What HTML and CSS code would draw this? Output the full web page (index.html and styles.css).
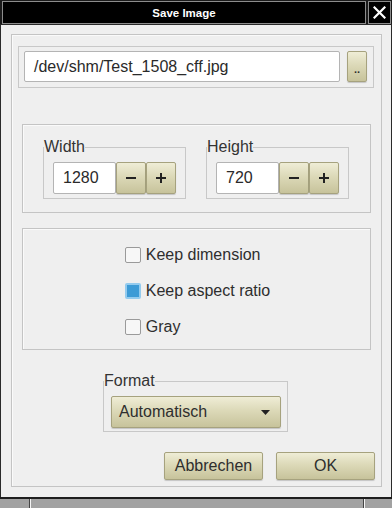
FILE: index.html
```html
<!DOCTYPE html>
<html>
<head>
<meta charset="utf-8">
<link rel="stylesheet" href="styles.css">
</head>
<body>
<div class="win">
  <div class="titlebar">
    <div class="title">Save Image</div>
    <div class="close">
      <svg width="13" height="13" viewBox="0 0 13 13"><path d="M1.5 1.5 L11.5 11.5 M11.5 1.5 L1.5 11.5" stroke="#fff" stroke-width="2.2" stroke-linecap="square"/></svg>
    </div>
  </div>
  <div class="dialog">
    <div class="frame">
      <div class="filebox">
        <div class="field file">/dev/shm/Test_1508_cff.jpg</div>
        <div class="btn dots">..</div>
      </div>
      <div class="group sizegroup">
        <fieldset class="fs">
          <legend>Width</legend>
          <div class="spin">
            <div class="field num">1280</div>
            <div class="btn sb">
              <svg width="12" height="12" viewBox="0 0 12 12"><path d="M1 6 H11" stroke="#222" stroke-width="2"/></svg>
            </div>
            <div class="btn sb">
              <svg width="12" height="12" viewBox="0 0 12 12"><path d="M1 6 H11 M6 1 V11" stroke="#222" stroke-width="2"/></svg>
            </div>
          </div>
        </fieldset>
        <fieldset class="fs">
          <legend>Height</legend>
          <div class="spin">
            <div class="field num">720</div>
            <div class="btn sb">
              <svg width="12" height="12" viewBox="0 0 12 12"><path d="M1 6 H11" stroke="#222" stroke-width="2"/></svg>
            </div>
            <div class="btn sb">
              <svg width="12" height="12" viewBox="0 0 12 12"><path d="M1 6 H11 M6 1 V11" stroke="#222" stroke-width="2"/></svg>
            </div>
          </div>
        </fieldset>
      </div>
      <div class="group checkgroup">
        <div class="checklist">
          <div class="row"><span class="cb"></span><span>Keep dimension</span></div>
          <div class="row"><span class="cb on"></span><span>Keep aspect ratio</span></div>
          <div class="row"><span class="cb"></span><span>Gray</span></div>
        </div>
      </div>
      <div class="formatrow">
        <fieldset class="fs fmt">
          <legend>Format</legend>
          <div class="fmtin">
            <div class="btn combo"><span>Automatisch</span><svg width="9" height="5" viewBox="0 0 9 5"><path d="M0 0 H9 L4.5 5 Z" fill="#222"/></svg></div>
          </div>
        </fieldset>
      </div>
      <div class="buttons">
        <div class="btn act">Abbrechen</div>
        <div class="btn act">OK</div>
      </div>
    </div>
  </div>
  <div class="taskbar">
    <div class="seg s1"></div>
    <div class="seg s2"></div>
    <div class="seg s3"></div>
  </div>
</div>
</body>
</html>
```
FILE: styles.css
```css
html, body {
  margin: 0;
  padding: 0;
  width: 392px;
  height: 508px;
  overflow: hidden;
  background: #2a2a2a;
  font-family: "Liberation Sans", Arial, sans-serif;
  color: #2e2e2e;
}
.win {
  display: flex;
  flex-direction: column;
  height: 508px;
}
.titlebar {
  display: flex;
  gap: 2px;
  height: 24px;
  padding: 1px 1px 0 2px;
  box-sizing: border-box;
  background: #1a1a1a;
}
.title {
  flex: 1;
  background: #000;
  border: 1px solid #8c8c8c;
  color: #fff;
  font-weight: bold;
  font-size: 11.5px;
  display: flex;
  align-items: center;
  justify-content: center;
}
.close {
  width: 21px;
  background: #000;
  border: 1px solid #8c8c8c;
  display: flex;
  align-items: center;
  justify-content: center;
}
.dialog {
  flex: 1;
  margin: 1px 1px 0 1px;
  background: #efefef;
  padding: 9px 9px 0 10px;
}
.frame {
  border: 1px solid #c4c4c4;
  box-shadow: inset 1px 1px 0 #fafafa;
  display: flex;
  flex-direction: column;
  padding-bottom: 6px;
}
.filebox {
  margin: 11px 7px 0 6px;
  border: 1px solid #c8c8c8;
  padding: 4px 6px 5px 5px;
  display: flex;
  gap: 7px;
}
.field {
  background: #fff;
  border: 1px solid #b4b4b4;
  border-radius: 2px;
  box-sizing: border-box;
  display: flex;
  align-items: center;
  color: #2a2a2a;
}
.file {
  flex: 1;
  height: 31px;
  padding-left: 9px;
  font-size: 16px;
}
.btn {
  box-sizing: border-box;
  border: 1px solid #a6a27e;
  border-radius: 2px;
  background: linear-gradient(#efedd6, #dcd9b8 45%, #c7c39b);
  box-shadow: 0 1px 1px rgba(0,0,0,0.18);
  display: flex;
  align-items: center;
  justify-content: center;
  color: #2e2e2e;
}
.dots {
  width: 20px;
  height: 31px;
  font-size: 11px;
  font-weight: bold;
  padding-top: 4px;
}
.group {
  margin-left: 10px;
  margin-right: 10px;
  border: 1px solid #c4c4c4;
  box-shadow: inset 1px 1px 0 #fafafa;
}
.sizegroup {
  margin-top: 36px;
  display: flex;
  gap: 20px;
  padding: 13px 20px 13px 20px;
}
.fs {
  margin: 0;
  padding: 0;
  border: 1px solid #c8c8c8;
  min-width: 0;
}
.fs legend {
  padding: 0;
  font-size: 16px;
  line-height: 18px;
  color: #333;
}
.sizegroup .fs {
  width: 143px;
  box-sizing: border-box;
}
.spin {
  display: flex;
  padding: 6px 0 4px 9px;
}
.num {
  width: 63px;
  height: 32px;
  padding-left: 9px;
  font-size: 16px;
}
.sb {
  width: 30px;
  height: 32px;
}
.checkgroup {
  margin-top: 15px;
  padding: 8px 0 4px 0;
  display: flex;
  justify-content: center;
}
.checklist {
  display: flex;
  flex-direction: column;
  padding-left: 2px;
}
.row {
  height: 36px;
  display: flex;
  align-items: center;
  gap: 5px;
  font-size: 16px;
  color: #2e2e2e;
}
.cb {
  width: 16px;
  height: 16px;
  box-sizing: border-box;
  border: 1px solid #9a9a9a;
  border-radius: 2px;
  background: #f7f7f7;
}
.cb.on {
  border: 2px solid #94cbee;
  background: #3d9bd6;
}
.formatrow {
  margin-top: 22px;
  display: flex;
  padding-left: 91px;
}
.fmt {
  width: 185px;
  box-sizing: border-box;
}
.fmtin {
  padding: 6px 6px 3px 7px;
}
.combo {
  height: 32px;
  justify-content: space-between;
  padding: 0 10px 0 7px;
  font-size: 16px;
}
.buttons {
  margin-top: 20px;
  margin-right: 6px;
  display: flex;
  justify-content: flex-end;
  gap: 13px;
}
.act {
  width: 99px;
  height: 28px;
  font-size: 16px;
}
.taskbar {
  height: 9px;
  border-top: 2px solid #1e1e1e;
  display: flex;
  background: #a2a2a2;
}
.seg {
  height: 9px;
}
.s1 { width: 29px; border-right: 1px solid #444; }
.s2 { width: 332px; border-left: 1px solid #f4f4f4; border-right: 1px solid #444; }
.s3 { flex: 1; border-left: 1px solid #f4f4f4; }
```
